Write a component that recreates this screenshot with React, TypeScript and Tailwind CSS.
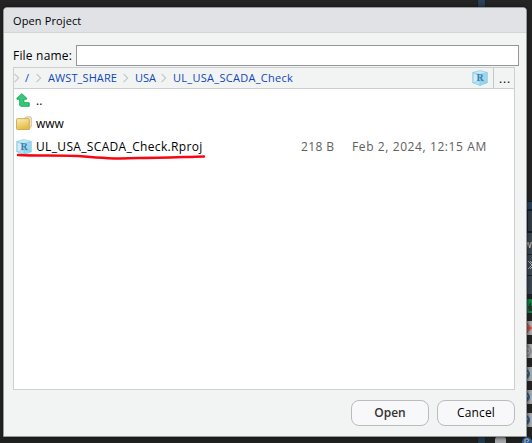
import React from "react";

function ProjectIcon() {
  return (
    <svg width="16" height="16" viewBox="0 0 16 16" className="block shrink-0">
      <path d="M8 .5 15.3 2.5V12.7L8 15.5.7 12.7V2.5Z" fill="#c5eaf6" />
      <path d="M.7 2.5 8 4.5V15.5L.7 12.7Z" fill="#b4e2f2" />
      <path d="M15.3 2.5 8 4.5V15.5L15.3 12.7Z" fill="#9ad8ec" />
      <path d="M8 .5 15.3 2.5V12.7L8 15.5.7 12.7V2.5ZM.7 2.5 8 4.5 15.3 2.5M8 4.5V15.5M.7 12.7 8 10.5 15.3 12.7" fill="none" stroke="#7cc6df" strokeWidth=".6" />
      <path d="M2 4.5 7 5.5V11L2 12Z" fill="#d9f4fc" opacity=".7" />
      <text x="8.2" y="10.6" textAnchor="middle" fontFamily="Liberation Serif, serif" fontWeight="700" fontSize="10" fill="#3f7cb0">R</text>
    </svg>
  );
}

function UpIcon() {
  return (
    <svg width="15" height="15" viewBox="0 0 15 15" className="block shrink-0">
      <path d="M5.8.7 10.7 5.2V6.2H7.9V9.7H13.2V13.3H4.7L3.7 12.3V6.2H.9V5.2Z" fill="#35c97c" stroke="#18a458" strokeWidth=".9" />
    </svg>
  );
}

function FolderIcon() {
  return (
    <svg width="16" height="15" viewBox="0 0 16 15" className="block shrink-0">
      <defs>
        <linearGradient id="folder" x1="0" y1="0" x2=".4" y2="1">
          <stop offset="0" stopColor="#fbeeb8" />
          <stop offset="1" stopColor="#e5bd45" />
        </linearGradient>
      </defs>
      <path d="M8 3 9.5 1.2Q10 .8 11 .8H14Q15.3.8 15.3 2V11L13 13Z" fill="#f4ead0" stroke="#cbb47c" strokeWidth=".8" />
      <path d="M.5 3.5Q.5 2.6 1.4 2.6H12.3Q13.3 2.6 13.3 3.5V13.5H1.4Q.5 13.5.5 12.6Z" fill="url(#folder)" stroke="#c8a040" strokeWidth=".8" />
    </svg>
  );
}

function Chevron() {
  return (
    <svg width="6" height="10" viewBox="0 0 6 10" className="block shrink-0">
      <path d="M.5.8 4.7 5 .5 9.2" fill="none" stroke="#c3c6c9" strokeWidth="1.1" />
    </svg>
  );
}

function ToolRow({ children }: { children: React.ReactNode }) {
  return <div className="mb-[9px] flex h-[14px] items-center overflow-hidden bg-[#a9abad]">{children}</div>;
}

function Help() {
  return (
    <svg width="6" height="12" viewBox="0 0 6 12">
      <circle cx="-1" cy="6" r="5" fill="#315f93" />
      <path d="M0 3.5Q2 4 1 6L0 7" stroke="#b8c5d3" fill="none" />
    </svg>
  );
}

function Backdrop() {
  return (
    <div className="flex h-[443px] w-[532px] flex-col bg-[#242424]">
      <div className="flex h-[7px] pl-[477px]">
        <div className="w-[9px] border-x border-[#14212c] bg-[#2b4257]" />
      </div>
      <div className="flex h-[429px] justify-end">
        <div className="w-[6px] overflow-hidden">
          <div className="mt-[194px] h-[8px] border-t border-[#101d29] bg-[#2a4058]" />
          <div className="h-[24px] border-2 border-r-0 border-[#0f1d29] bg-[#333c45]" />
          <div className="flex h-[21px] items-center bg-[#3c4651] font-['Open_Sans',sans-serif] text-[10px] leading-none text-[#d4d7da]">
            <span className="-ml-[2px]">w</span>
          </div>
          <div className="flex h-[21px] items-center border-t border-[#122435] bg-[#3c4651]">
            <svg width="6" height="10" viewBox="0 0 6 10"><path d="M2 1 6 5 2 9M4 1 6 3M4 9 6 7" stroke="#aeb2b7" fill="none" /></svg>
          </div>
          <div className="mb-1 h-[20px] border-y border-[#122435] bg-[#3c4651]" />
          <svg width="6" height="14" viewBox="0 0 6 14" className="mb-[9px] block bg-[#128445]"><path d="M2 8 5 3V7H6V12H3Z" fill="#25392d" /></svg>
          <div className="-mt-px">
            <ToolRow><svg width="6" height="14"><path d="M0 2 5 7 0 12M0 5 3 7 0 9" fill="none" stroke="#d34a37" strokeWidth="1.5" /></svg></ToolRow>
            <ToolRow><svg width="6" height="14"><circle cx="0" cy="7" r="5" fill="none" stroke="#777c80" /><path d="M0 7H3" stroke="#777c80" /></svg></ToolRow>
            <ToolRow><Help /></ToolRow>
            <ToolRow><Help /></ToolRow>
            <ToolRow><Help /></ToolRow>
          </div>
        </div>
      </div>
      <div className="flex h-[7px] overflow-hidden bg-[#1f2020] pl-[477px]">
        <div className="w-[9px] border-x border-[#111d27] bg-[#23394c]" />
        <div className="ml-[9px] h-[7px] w-[11px] rounded-t-sm bg-[#a3a6a9]" />
        <svg width="10" height="7" viewBox="0 0 10 7" className="ml-[16px] block shrink-0">
          <circle cx="5" cy="6" r="5" fill="#315f93" />
          <path d="M3 7V3H6Q8 5 5 6" fill="none" stroke="#c0cbd6" />
        </svg>
      </div>
    </div>
  );
}

export default function App() {
  return (
    <div className="relative h-[443px] w-[532px] overflow-hidden font-['Open_Sans','Noto_Sans',sans-serif] text-black">
      <Backdrop />
      <section className="absolute left-[3px] top-[7px] flex h-[430px] w-[524px] flex-col rounded-t-[4px] border border-[#989b9c] bg-[#f2f4f4] shadow-[0_0_4px_#111]">
        <header className="flex h-[25px] shrink-0 items-center rounded-t-[3px] border-b border-[#d2d4d8] bg-[#e0e2e6] pl-[9px] text-[11px] leading-none tracking-[0.12px]">
          Open Project
        </header>
        <div className="mt-[12px] flex h-[21px] shrink-0 items-center pl-[9px]">
          <label className="w-[63px] whitespace-nowrap text-[12px] leading-none tracking-[0.2px]">File name:</label>
          <div className="h-[21px] w-[443px] border border-[#949697] bg-white" />
        </div>
        <main className="ml-[9px] mt-px flex h-[323px] w-[502px] shrink-0 flex-col border border-[#cccfd0] bg-white">
          <nav className="flex h-[21px] shrink-0 items-center border-b border-[#cccfd0] bg-[#f2f4f4] text-[11px] leading-none text-[#1146b8]">
            <Chevron /><span className="ml-[5px] w-[11px] pb-[2px]">/</span>
            <Chevron /><span className="ml-[6px] w-[75px] whitespace-nowrap pb-[2px] tracking-[0.1px]">AWST_SHARE</span>
            <Chevron /><span className="ml-[6px] w-[26px] whitespace-nowrap pb-[2px]">USA</span>
            <Chevron /><span className="ml-[6px] w-[299px] whitespace-nowrap pb-[2px] tracking-[0.29px]">UL_USA_SCADA_Check</span>
            <ProjectIcon />
            <span className="ml-auto flex h-full w-[21px] items-center border-l border-[#c5c8ca] pl-[5px] pt-[2px] text-[12px] tracking-[0.8px] text-black">...</span>
          </nav>
          <div className="flex h-[23px] items-center pl-[2px] text-[12px] leading-none"><UpIcon /><span className="ml-[5px] pt-px">..</span></div>
          <div className="flex h-[23px] items-center pl-[2px] text-[12px] leading-none"><FolderIcon /><span className="ml-[4px] pt-px">www</span></div>
          <div className="relative flex h-[23px] items-center pl-[2px] text-[12px] leading-none">
            <ProjectIcon />
            <span className="ml-[4px] w-[265px] whitespace-nowrap tracking-[0.34px]">UL_USA_SCADA_Check.Rproj</span>
            <span className="w-[51px] whitespace-nowrap tracking-[0.4px] text-[#606060]">218 B</span>
            <span className="whitespace-nowrap tracking-[0.6px] text-[#606060]">Feb 2, 2024, 12:15 AM</span>
            <svg width="192" height="10" viewBox="0 0 192 10" className="absolute left-[2px] top-[17px]">
              <path d="M2 3C20 4 40 3 61 4C85 6 99 7.2 122 6C145 6 167 5 188 4.5" fill="none" stroke="#f80710" strokeWidth="2.4" strokeLinecap="round" />
            </svg>
          </div>
        </main>
        <footer className="mt-[10px] flex gap-[8px] pl-[347px]">
          <button className="h-[26px] w-[78px] rounded-[8px] border border-[#b9bbbd] bg-[#f8f8fa] text-[12px] font-semibold leading-none text-[#333]">Open</button>
          <button className="h-[26px] w-[78px] rounded-[8px] border border-[#b9bbbd] bg-[#f8f8fa] text-[12px] leading-none tracking-[0.15px]">Cancel</button>
        </footer>
      </section>
    </div>
  );
}
